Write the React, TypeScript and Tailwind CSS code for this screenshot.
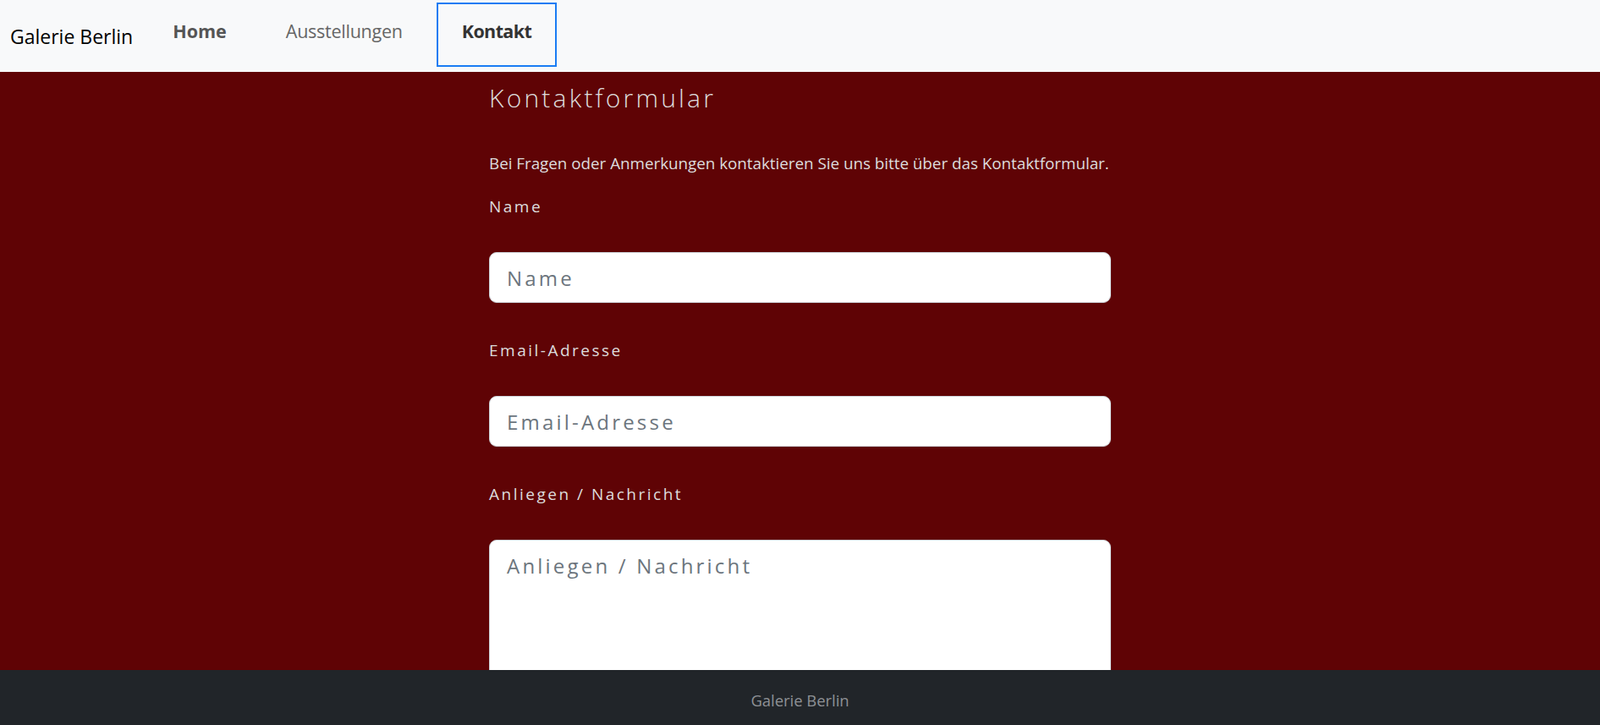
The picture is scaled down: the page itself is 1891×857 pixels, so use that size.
import React from "react";

const font = { fontFamily: '"Open Sans", "Noto Sans", Arial, sans-serif' };

function NavBar() {
  return (
    <nav className="flex h-[85px] shrink-0 items-start bg-[#f8f9fa] pl-3">
      <a href="#" className="mt-[27px] text-[23px] leading-[32px] text-black">
        Galerie Berlin
      </a>
      <div className="ml-[17px] mt-[3px] flex items-start gap-2.5">
        <a href="#" className="h-[76px] border-2 border-transparent px-[28px] pt-[17px] text-[21.5px] leading-[30px] font-bold text-[#555]">
          Home
        </a>
        <a href="#" className="h-[76px] border-2 border-transparent px-[28px] pt-[17px] text-[21.5px] leading-[30px] tracking-[-0.25px] text-[#666]">
          Ausstellungen
        </a>
        <a href="#" className="h-[76px] border-2 border-[#1a7cf3] px-[28px] pt-[17px] text-[21.5px] leading-[30px] tracking-[-0.6px] font-bold text-[#333]">
          Kontakt
        </a>
      </div>
    </nav>
  );
}

function Field({ label, textarea }: { label: string; textarea?: boolean }) {
  return (
    <div>
      <label className="block text-[19px] leading-[28px] tracking-[2.5px] text-[#ddd]">{label}</label>
      {textarea ? (
        <textarea
          rows={6}
          placeholder={label}
          className="mt-[40px] block h-[220px] w-full resize-none rounded-[9px] border border-[#ced4da] bg-white px-[20px] py-[12px] text-[24px] leading-[36px] tracking-[3.2px] text-[#495057] placeholder:text-[#6c757d] focus:outline-none"
        />
      ) : (
        <input
          type="text"
          placeholder={label}
          className="mt-[40px] block h-[60px] w-full rounded-[9px] border border-[#ced4da] bg-white px-[20px] text-[24px] tracking-[3.2px] text-[#495057] placeholder:text-[#6c757d] focus:outline-none"
        />
      )}
    </div>
  );
}

export default function App() {
  return (
    <div className="flex h-screen flex-col overflow-hidden bg-[#5f0305]" style={font}>
      <NavBar />
      <main className="flex-1 overflow-hidden">
        <div className="mx-auto w-[735px] pt-[11px]">
          <h1 className="text-[30px] leading-[40px] font-light tracking-[3.2px] text-[#ddd]">Kontaktformular</h1>
          <p className="mt-[43px] text-[18.8px] leading-[28px] text-[#ddd]">
            Bei Fragen oder Anmerkungen kontaktieren Sie uns bitte über das Kontaktformular.
          </p>
          <form className="mt-[23px] flex flex-col gap-[42px]">
            <Field label="Name" />
            <Field label="Email-Adresse" />
            <Field label="Anliegen / Nachricht" textarea />
          </form>
        </div>
      </main>
      <footer className="fixed bottom-0 left-0 right-0 flex h-[65px] items-center justify-center bg-[#212529] pt-[6px] text-[18.4px] text-[#8e9195]">
        Galerie Berlin
      </footer>
    </div>
  );
}
